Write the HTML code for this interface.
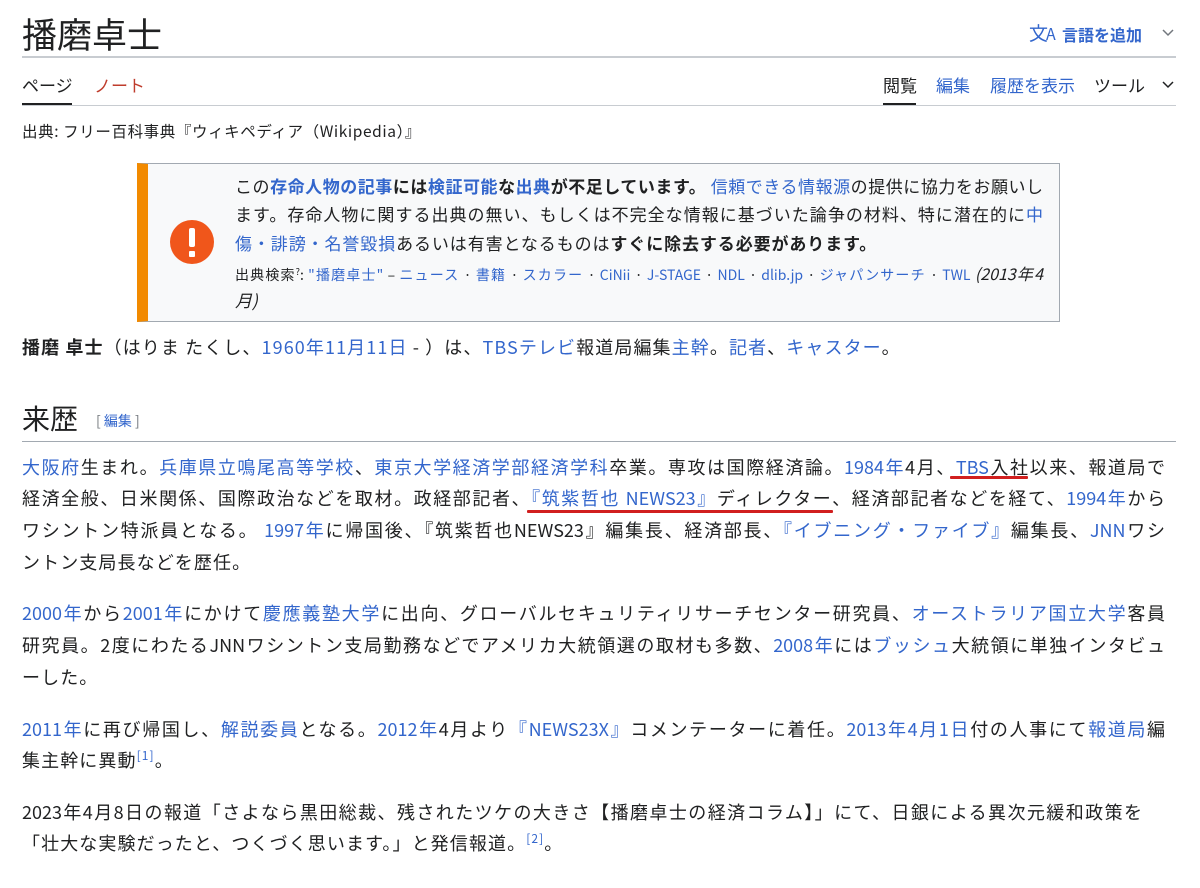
<!DOCTYPE html>
<html><head><meta charset="utf-8">
<style>
*{margin:0;padding:0;box-sizing:border-box}
body{width:1200px;height:888px;background:#fff;position:relative;overflow:hidden;color:#202122;font-family:"Noto Sans CJK JP","Liberation Sans",sans-serif}
.a{position:absolute;white-space:nowrap}
a{color:#3366cc;text-decoration:none}
.l{position:absolute;left:22px;width:1143px;height:32px;line-height:32px;font-size:18px;white-space:nowrap;text-align:justify;text-align-last:justify}
.ll{text-align-last:left;letter-spacing:1.1px}
.hr{position:absolute;height:1px;background:#a2a9b1}
.b{position:absolute;left:235px;width:808px;font-size:17px;line-height:28px;height:28px;white-space:nowrap;text-align:justify;text-align-last:justify}
.red{position:absolute;height:3px;background:#d11f1f;border-radius:1px}
sup{font-size:12px;vertical-align:7px;line-height:0}
</style></head><body>
<div class="a" style="left:22px;top:11px;font-size:35px;line-height:46px">播磨卓士</div>
<div class="a" style="left:1029px;top:20px;font-size:19px;color:#3366cc;line-height:26px;letter-spacing:-2px">文<span style="font-size:16px">A</span></div>
<div class="a" style="left:1062px;top:22px;font-size:16px;font-weight:bold;color:#3366cc;line-height:24px">言語を追加</div>
<svg class="a" style="left:1162px;top:28px" width="12" height="10"><path d="M1 2l5 5 5-5" stroke="#72777d" stroke-width="1.5" fill="none"/></svg>
<div class="hr" style="left:22px;top:56px;width:1154px;height:2px;background:#c8ccd1"></div>
<div class="a" style="left:22px;top:73px;font-size:17px;line-height:24px">ページ</div>
<div class="a" style="left:94px;top:73px;font-size:17px;line-height:24px;color:#bf3c2c">ノート</div>
<div class="a" style="left:22px;top:103px;width:50px;height:2px;background:#202122"></div>
<div class="a" style="left:883px;top:73px;font-size:17px;line-height:24px">閲覧</div>
<div class="a" style="left:883px;top:103px;width:33px;height:2px;background:#202122"></div>
<div class="a" style="left:936px;top:73px;font-size:17px;line-height:24px;color:#3366cc">編集</div>
<div class="a" style="left:990px;top:73px;font-size:17px;line-height:24px;color:#3366cc">履歴を表示</div>
<div class="a" style="left:1094px;top:73px;font-size:17px;line-height:24px">ツール</div>
<svg class="a" style="left:1162px;top:80px" width="12" height="10"><path d="M1 2l5 5 5-5" stroke="#202122" stroke-width="1.5" fill="none"/></svg>
<div class="hr" style="left:22px;top:105px;width:1154px;background:#c8ccd1"></div>
<div class="a" style="left:22px;top:120px;font-size:15.5px;line-height:22px;letter-spacing:0.6px">出典: フリー百科事典『ウィキペディア（Wikipedia）』</div>

<div class="a" style="left:137px;top:163px;width:923px;height:159px;background:#f8f9fa;border:1px solid #a2a9b1;border-left:11px solid #f28a00"></div>
<div class="a" style="left:170px;top:220px;width:44px;height:44px;border-radius:50%;background:#f0561b"></div>
<div class="a" style="left:189px;top:228px;width:6px;height:19px;background:#fff;border-radius:2px"></div>
<div class="a" style="left:189px;top:251px;width:6px;height:6px;background:#fff;border-radius:1px"></div>
<div class="b" style="top:172px">この<a><b>存命人物の記事</b></a><b>には</b><a><b>検証可能</b></a><b>な</b><a><b>出典</b></a><b>が不足しています。</b> <a>信頼できる情報源</a>の提供に協力をお願いし</div>
<div class="b" style="top:200px">ます。存命人物に関する出典の無い、もしくは不完全な情報に基づいた論争の材料、特に潜在的に<a>中</a></div>
<div class="b" style="top:229px;text-align-last:left;letter-spacing:0.9px"><a>傷・誹謗・名誉毀損</a>あるいは有害となるものは<b>すぐに除去する必要があります。</b></div>
<div class="b" style="top:260px;font-size:14px;height:26px;line-height:26px">出典検索<sup style="font-size:9px;vertical-align:5px">?</sup>: <a>"播磨卓士"</a> – <a>ニュース</a> · <a>書籍</a> · <a>スカラー</a> · <a>CiNii</a> · <a>J-STAGE</a> · <a>NDL</a> · <a>dlib.jp</a> · <a>ジャパンサーチ</a> · <a>TWL</a> <i style="font-size:16px">(2013年4</i></div>
<div class="b" style="top:286px;text-align-last:left"><i>月)</i></div>

<div class="l ll" style="top:331px"><b>播磨 卓士</b>（はりま たくし、<a>1960年</a><a>11月11日</a> - ）は、<a>TBSテレビ</a>報道局編集<a>主幹</a>。<a>記者</a>、<a>キャスター</a>。</div>

<div class="a" style="left:22px;top:398px;font-size:28px;line-height:40px">来歴</div>
<div class="a" style="left:96px;top:411px;font-size:14px;line-height:20px;color:#72777d">[ <a>編集</a> ]</div>
<div class="hr" style="left:22px;top:441px;width:1154px"></div>

<div class="l" style="top:451px"><a>大阪府</a>生まれ。<a>兵庫県立鳴尾高等学校</a>、<a>東京大学経済学部経済学科</a>卒業。専攻は国際経済論。<a>1984年</a>4月、<a>TBS</a>入社以来、報道局で</div>
<div class="l" style="top:482px">経済全般、日米関係、国際政治などを取材。政経部記者、<a>『筑紫哲也 NEWS23』</a>ディレクター、経済部記者などを経て、<a>1994年</a>から</div>
<div class="l" style="top:514px">ワシントン特派員となる。 <a>1997年</a>に帰国後、『筑紫哲也NEWS23』編集長、経済部長、<a>『イブニング・ファイブ』</a>編集長、<a>JNN</a>ワシ</div>
<div class="l ll" style="top:546px">ントン支局長などを歴任。</div>
<div class="red" style="left:950px;top:476px;width:78px"></div>
<div class="red" style="left:527px;top:510px;width:306px"></div>

<div class="l" style="top:597px"><a>2000年</a>から<a>2001年</a>にかけて<a>慶應義塾大学</a>に出向、グローバルセキュリティリサーチセンター研究員、<a>オーストラリア国立大学</a>客員</div>
<div class="l" style="top:629px">研究員。2度にわたるJNNワシントン支局勤務などでアメリカ大統領選の取材も多数、<a>2008年</a>には<a>ブッシュ</a>大統領に単独インタビュ</div>
<div class="l ll" style="top:661px">ーした。</div>

<div class="l" style="top:713px"><a>2011年</a>に再び帰国し、<a>解説委員</a>となる。<a>2012年</a>4月より<a>『NEWS23X』</a>コメンテーターに着任。<a>2013年</a><a>4月1日</a>付の人事にて<a>報道局</a>編</div>
<div class="l ll" style="top:744px">集主幹に異動<sup><a>[1]</a></sup>。</div>

<div class="l" style="top:796px;width:1120px">2023年4月8日の報道「さよなら黒田総裁、残されたツケの大きさ【播磨卓士の経済コラム】」にて、日銀による異次元緩和政策を</div>
<div class="l ll" style="top:827px">「壮大な実験だったと、つくづく思います。」と発信報道。<sup><a>[2]</a></sup>。</div>
</body></html>
